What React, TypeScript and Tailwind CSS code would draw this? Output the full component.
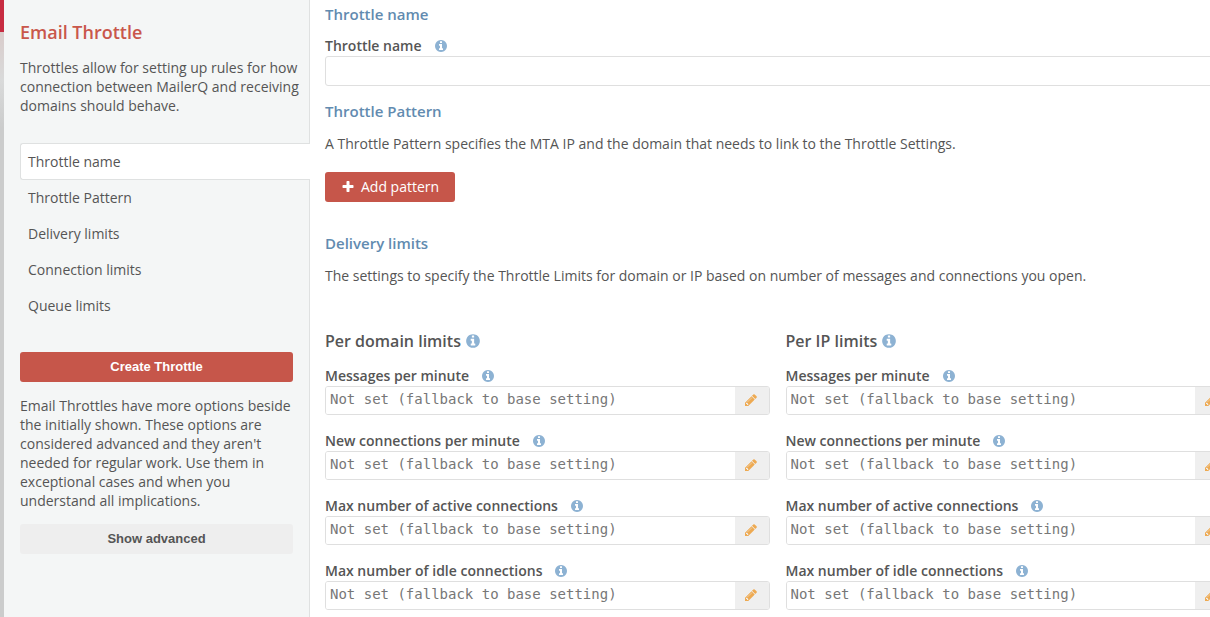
import React from "react";

const sections = [
  "Throttle name",
  "Throttle Pattern",
  "Delivery limits",
  "Connection limits",
  "Queue limits",
];

const limits = [
  "Messages per minute",
  "New connections per minute",
  "Max number of active connections",
  "Max number of idle connections",
];

const columns = [
  { id: "domain", title: "Per domain limits" },
  { id: "ip", title: "Per IP limits" },
];

const InfoIcon = ({ className }: { className: string }) => (
  <svg viewBox="0 0 1792 1792" className={className} aria-hidden="true">
    <path
      fill="currentColor"
      d="M1152 1376v-160q0-14-9-23t-23-9h-96v-512q0-14-9-23t-23-9h-320q-14 0-23 9t-9 23v160q0 14 9 23t23 9h96v320h-96q-14 0-23 9t-9 23v160q0 14 9 23t23 9h448q14 0 23-9t9-23zm-128-896v-160q0-14-9-23t-23-9h-192q-14 0-23 9t-9 23v160q0 14 9 23t23 9h192q14 0 23-9t9-23zm640 416q0 209-103 385.5t-279.5 279.5-385.5 103-385.5-103-279.5-279.5-103-385.5 103-385.5 279.5-279.5 385.5-103 385.5 103 279.5 279.5 103 385.5z"
    />
  </svg>
);

const PencilIcon = () => (
  <svg viewBox="0 0 1792 1792" className="size-[14px]" aria-hidden="true">
    <path
      fill="currentColor"
      d="M491 1536l91-91-235-235-91 91v107h128v128h107zm523-928q0-22-22-22-10 0-17 7l-542 542q-7 7-7 17 0 22 22 22 10 0 17-7l542-542q7-7 7-17zm-54-192l416 416-832 832h-416v-416zm683 96q0 53-37 90l-166 166-416-416 166-165q36-38 90-38 53 0 91 38l235 234q37 39 37 91z"
    />
  </svg>
);

const PlusIcon = () => (
  <svg viewBox="0 0 1792 1792" className="size-[14px]" aria-hidden="true">
    <path
      fill="currentColor"
      d="M1600 736v192q0 40-28 68t-68 28h-416v416q0 40-28 68t-68 28h-192q-40 0-68-28t-28-68v-416h-416q-40 0-68-28t-28-68v-192q0-40 28-68t68-28h416v-416q0-40 28-68t68-28h192q40 0 68 28t28 68v416h416q40 0 68 28t28 68z"
    />
  </svg>
);

const SectionTitle = ({ children }: { children: React.ReactNode }) => (
  <h2 className="text-[15px] leading-5 font-semibold text-[#628bb0]">
    {children}
  </h2>
);

const FieldLabel = ({ id, text }: { id: string; text: string }) => (
  <div className="flex h-5 items-center gap-3">
    <label htmlFor={id} className="font-semibold">
      {text}
    </label>
    <InfoIcon className="size-[14px] text-[#8db2d3]" />
  </div>
);

const LimitField = ({ id, label }: { id: string; label: string }) => (
  <div>
    <FieldLabel id={id} text={label} />
    <div className="flex h-[29px] overflow-hidden rounded-[3px] border border-[#dfdfdf]">
      <input
        id={id}
        type="text"
        placeholder="Not set (fallback to base setting)"
        className="min-w-0 flex-1 bg-white px-1 pb-1 font-['DejaVu_Sans_Mono',monospace] text-sm placeholder:text-[#777] outline-none"
      />
      <button
        type="button"
        aria-label={`Edit ${label}`}
        className="flex w-[34px] items-center justify-center bg-[#efefef] pr-0.5 pb-0.5 text-[#eeaa52]"
      >
        <PencilIcon />
      </button>
    </div>
  </div>
);

const Sidebar = () => (
  <aside className="w-[306px] shrink-0 border-r border-[#dfe1e1] bg-[#f4f6f6] px-4 pt-5">
    <h1 className="text-lg leading-6 font-semibold text-[#c9574b]">
      Email Throttle
    </h1>
    <p className="mt-[14px] -mr-2 leading-[19px]">
      Throttles allow for setting up rules for how connection between MailerQ
      and receiving domains should behave.
    </p>
    <nav className="mt-7 -mr-[17px]">
      {sections.map((name, i) => (
        <a
          key={name}
          href="#"
          className={
            i === 0
              ? "flex h-[37px] items-center rounded-l-[3px] border border-r-0 border-[#dfe1e1] bg-white pl-[7px]"
              : "flex h-9 items-center pl-2"
          }
        >
          {name}
        </a>
      ))}
    </nav>
    <button
      type="button"
      className="mt-7 h-[30px] w-full rounded-[3px] bg-[#c6564a] font-['Liberation_Sans',sans-serif] text-[13px] font-bold text-white"
    >
      Create Throttle
    </button>
    <p className="mt-[14px] -mr-2 leading-[19px]">
      Email Throttles have more options beside the initially shown. These
      options are considered advanced and they aren't needed for regular work.
      Use them in exceptional cases and when you understand all implications.
    </p>
    <button
      type="button"
      className="mt-[14px] h-[30px] w-full rounded-[3px] bg-[#eeeeee] font-['Liberation_Sans',sans-serif] text-[13px] font-bold"
    >
      Show advanced
    </button>
  </aside>
);

const App = () => {
  return (
    <div className="flex h-screen overflow-hidden bg-white font-['Open_Sans',sans-serif] text-sm text-[#555]">
      <div className="flex w-1 shrink-0 flex-col bg-[#cbcccc]">
        <div className="h-8 bg-[#c72c41]" />
        <div className="h-24 bg-linear-to-b from-[#d9cccb] via-[#d9dada] to-[#cbcccc]" />
      </div>
      <Sidebar />
      <main className="min-w-0 flex-1 overflow-hidden pt-1 pl-[15px]">
        {/* the form runs on past the right edge of the pane */}
        <form className="-mr-5">
          <SectionTitle>Throttle name</SectionTitle>
          <div className="mt-3">
            <FieldLabel id="throttle-name" text="Throttle name" />
            <input
              id="throttle-name"
              type="text"
              className="block h-[30px] w-full rounded-[3px] border border-[#dfdfdf] px-1 outline-none"
            />
          </div>

          <div className="mt-[15px]">
            <SectionTitle>Throttle Pattern</SectionTitle>
            <p className="mt-[13px] leading-5">
              A Throttle Pattern specifies the MTA IP and the domain that needs
              to link to the Throttle Settings.
            </p>
            <button
              type="button"
              className="mt-[18px] flex h-[30px] items-center gap-[6px] rounded-[3px] bg-[#c6564a] px-4 text-white"
            >
              <PlusIcon />
              Add pattern
            </button>
          </div>

          <div className="mt-[31px]">
            <SectionTitle>Delivery limits</SectionTitle>
            <p className="mt-[13px] leading-5">
              The settings to specify the Throttle Limits for domain or IP based
              on number of messages and connections you open.
            </p>
            <div className="mt-[45px] grid grid-cols-2 gap-x-4">
              {columns.map((column) => (
                <div key={column.id}>
                  <h3 className="flex h-5 items-center gap-1 text-base font-semibold">
                    {column.title}
                    <InfoIcon className="size-4 text-[#8db2d3]" />
                  </h3>
                  <div className="mt-[15px] flex flex-col gap-4">
                    {limits.map((label, i) => (
                      <LimitField
                        key={label}
                        id={`${column.id}-${i}`}
                        label={label}
                      />
                    ))}
                  </div>
                </div>
              ))}
            </div>
          </div>
        </form>
      </main>
    </div>
  );
};

export default App;
